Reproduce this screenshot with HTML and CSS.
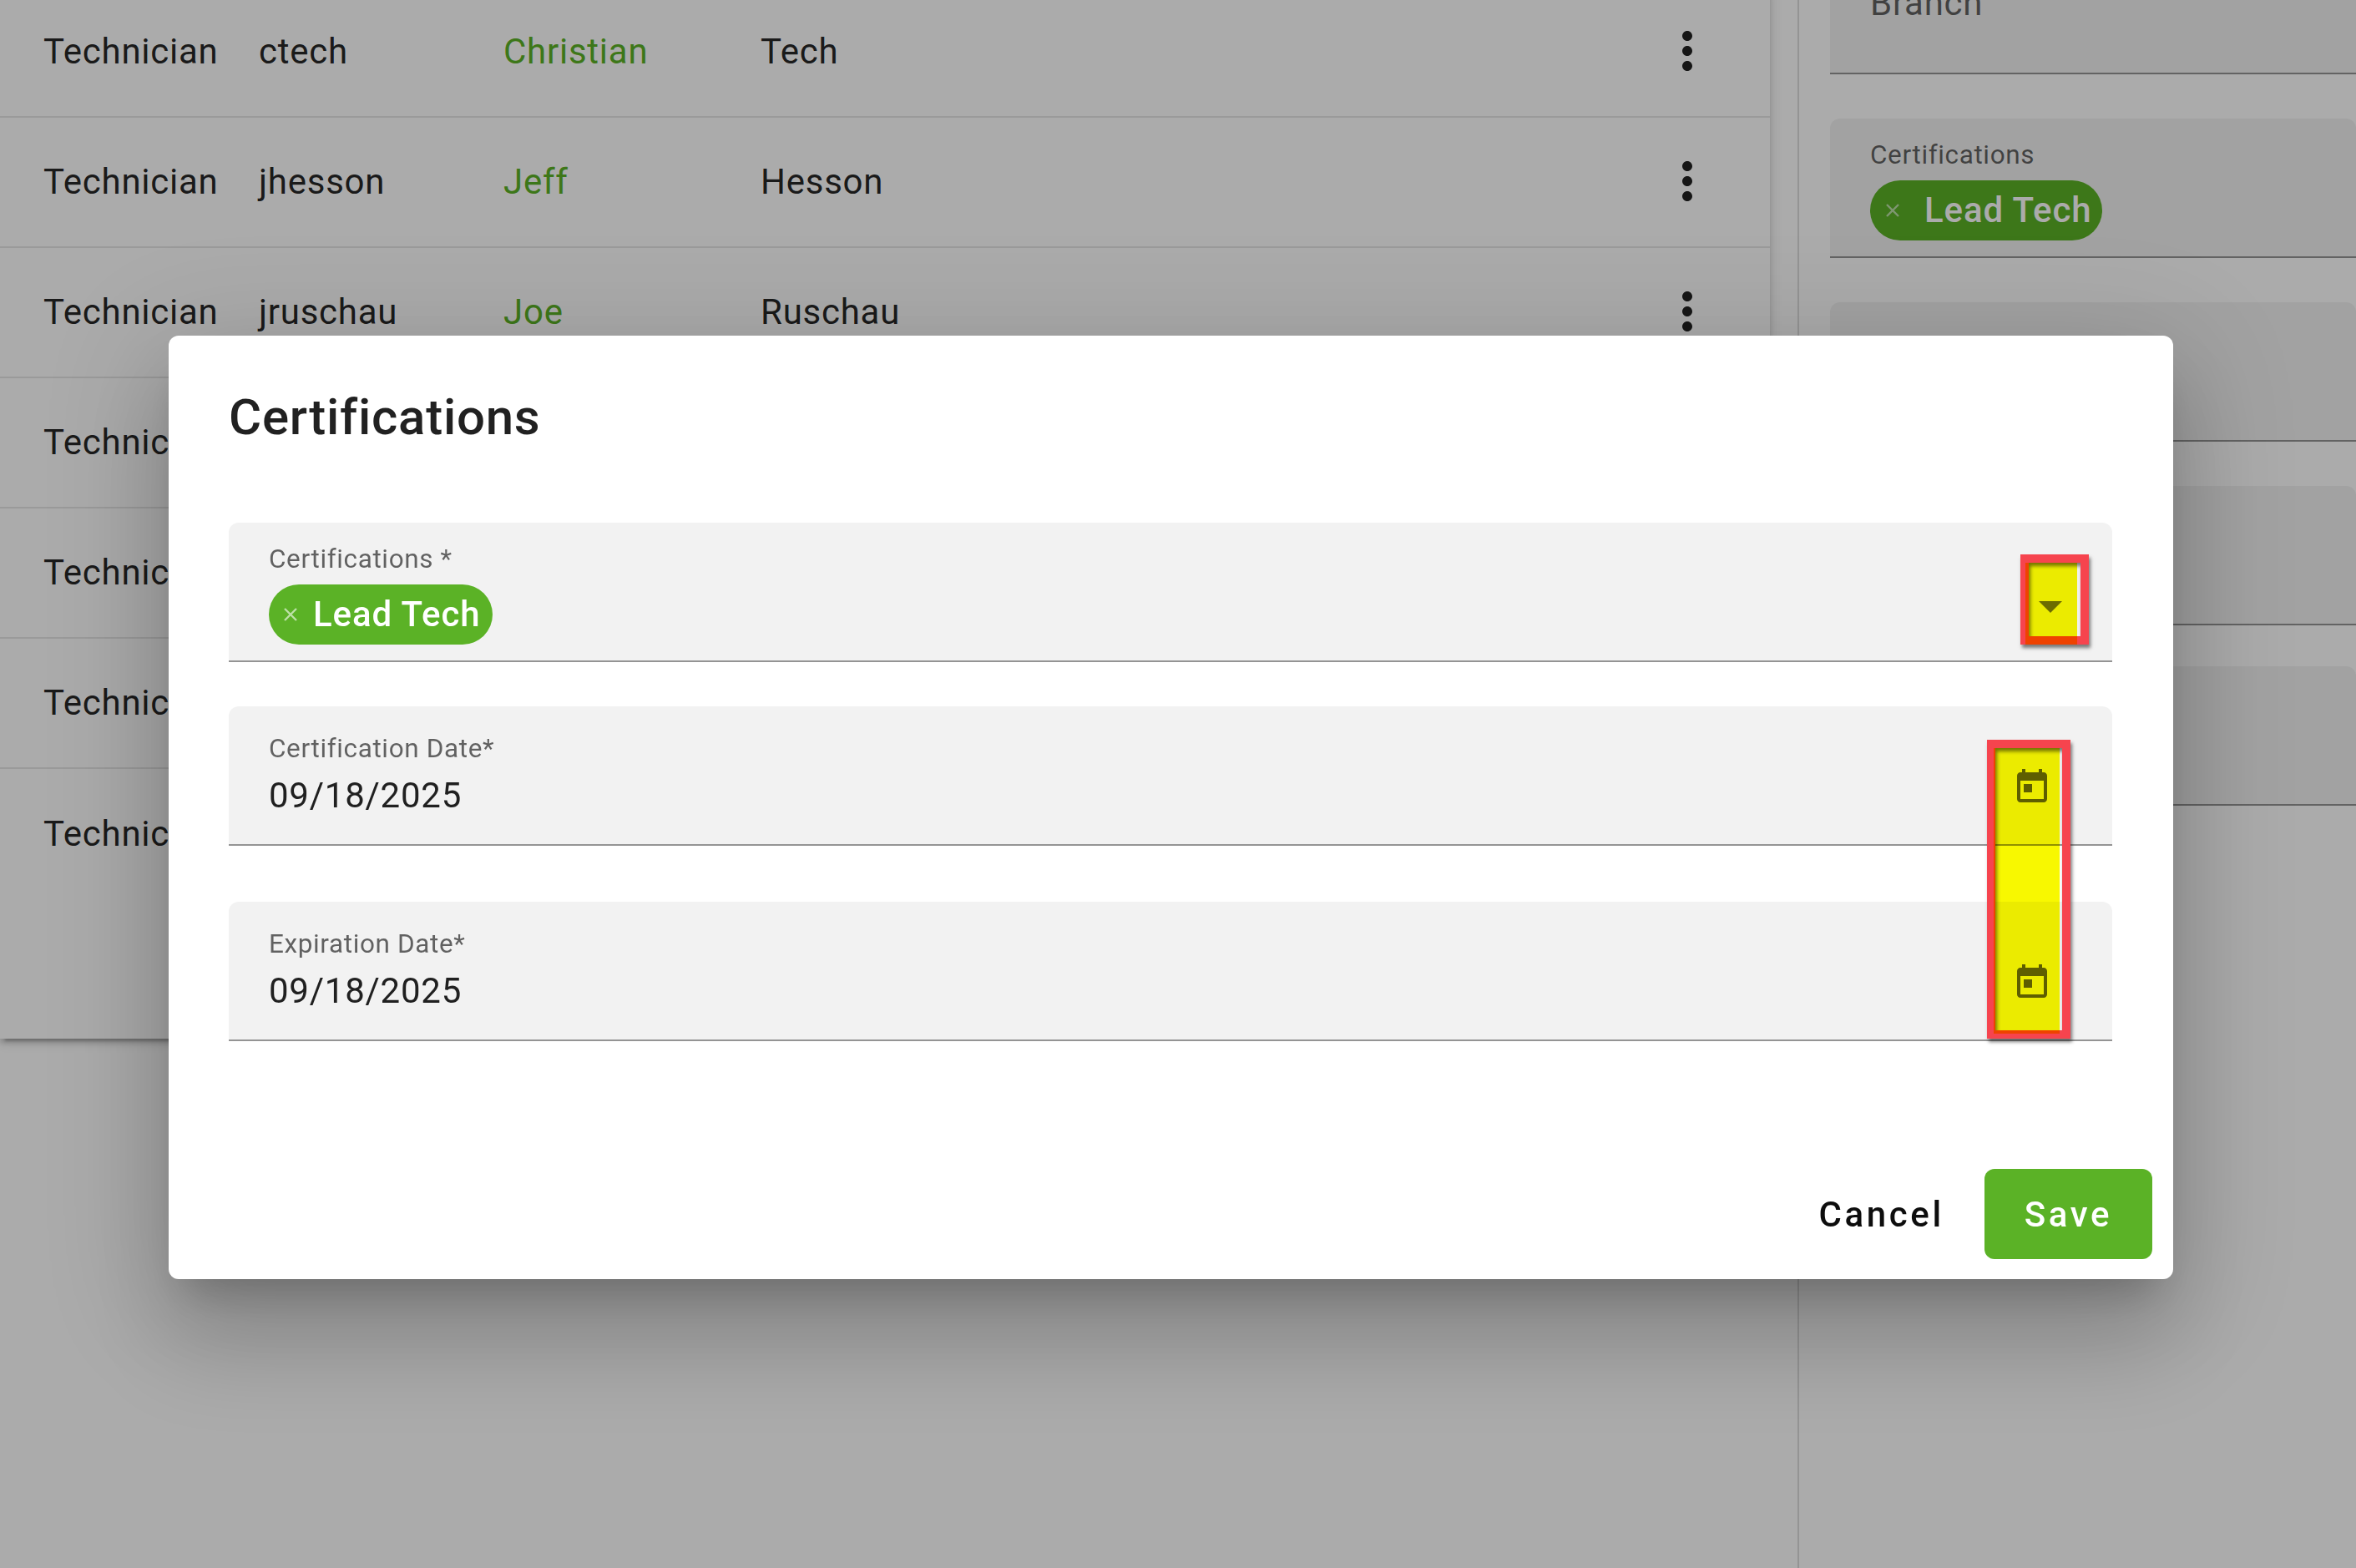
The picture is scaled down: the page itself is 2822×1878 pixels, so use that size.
FILE: index.html
```html
<!DOCTYPE html>
<html lang="en">
<head>
    <meta charset="UTF-8">
    <meta name="viewport" content="width=device-width, initial-scale=1.0">
    <title>Certifications</title>
    <link rel="stylesheet" href="styles.css">
</head>
<body>
    <svg class="sprite" aria-hidden="true">
        <symbol id="icon-more" viewBox="0 0 24 24">
            <path d="M12 8c1.1 0 2-.9 2-2s-.9-2-2-2-2 .9-2 2 .9 2 2 2zm0 2c-1.1 0-2 .9-2 2s.9 2 2 2 2-.9 2-2-.9-2-2-2zm0 6c-1.1 0-2 .9-2 2s.9 2 2 2 2-.9 2-2-.9-2-2-2z"/>
        </symbol>
        <symbol id="icon-today" viewBox="0 0 24 24">
            <path d="M19 3h-1V1h-2v2H8V1H6v2H5c-1.11 0-1.99.9-1.99 2L3 19c0 1.1.89 2 2 2h14c1.1 0 2-.9 2-2V5c0-1.1-.9-2-2-2zm0 16H5V8h14v11zM7 10h5v5H7z"/>
        </symbol>
        <symbol id="icon-remove" viewBox="0 0 18 18">
            <path d="M2 2l14 14M16 2L2 16"/>
        </symbol>
    </svg>

    <main class="page">
        <!-- Users table, scrolled a little -->
        <section class="table-card">
            <div class="row">
                <span class="edge"></span><span>Technician</span><span>ctech</span><span class="name">Christian</span><span>Tech</span>
                <svg class="more"><use href="#icon-more"/></svg>
            </div>
            <div class="row">
                <span class="edge"><span>n</span></span><span>Technician</span><span>jhesson</span><span class="name">Jeff</span><span>Hesson</span>
                <svg class="more"><use href="#icon-more"/></svg>
            </div>
            <div class="row">
                <span class="edge"></span><span>Technician</span><span>jruschau</span><span class="name">Joe</span><span>Ruschau</span>
                <svg class="more"><use href="#icon-more"/></svg>
            </div>
            <div class="row"><span class="edge"></span><span>Technician</span></div>
            <div class="row"><span class="edge"></span><span>Technician</span></div>
            <div class="row"><span class="edge"></span><span>Technician</span></div>
            <div class="row row-last"><span class="edge"></span><span>Technician</span></div>
        </section>

        <!-- Details panel -->
        <aside class="details">
            <div class="field field-plain">
                <span class="plain-value">Branch</span>
            </div>
            <div class="field field-chips">
                <div>
                    <div class="field-label">Certifications</div>
                    <span class="chip chip-wide">
                        <svg class="chip-x"><use href="#icon-remove"/></svg>
                        Lead Tech
                    </span>
                </div>
            </div>
            <div class="field"></div>
            <div class="field"></div>
            <div class="field field-tight"></div>
        </aside>
    </main>

    <div class="backdrop"></div>

    <div class="dialog">
        <h2 class="dialog-title">Certifications</h2>

        <div class="field field-chips">
            <div>
                <div class="field-label">Certifications *</div>
                <span class="chip">
                    <svg class="chip-x"><use href="#icon-remove"/></svg>
                    Lead Tech
                </span>
            </div>
            <span class="select-arrow"></span>
        </div>

        <div class="field field-date">
            <div>
                <div class="field-label">Certification Date*</div>
                <div class="date-value">09/18/2025</div>
            </div>
            <svg class="today"><use href="#icon-today"/></svg>
        </div>

        <div class="field field-date field-last">
            <div>
                <div class="field-label">Expiration Date*</div>
                <div class="date-value">09/18/2025</div>
            </div>
            <svg class="today"><use href="#icon-today"/></svg>
        </div>

        <div class="actions">
            <button class="btn btn-cancel" type="button">Cancel</button>
            <button class="btn btn-save" type="button">Save</button>
        </div>

        <!-- Screenshot annotations drawn on top of the dialog -->
        <div class="mark-frame mark-frame-arrow"></div>
        <div class="mark-fill mark-fill-arrow"></div>
        <div class="mark-frame mark-frame-dates"></div>
        <div class="mark-fill mark-fill-dates"></div>
    </div>
</body>
</html>
```

FILE: styles.css
```css
/* General Styles */
* {
    box-sizing: border-box;
}

html,
body {
    margin: 0;
    height: 100%;
    overflow: hidden;
}

body {
    position: relative;
    background: #ffffff;
    color: rgba(0, 0, 0, 0.87);
    font-family: Roboto, "Liberation Sans", sans-serif;
    font-size: 42px;
    letter-spacing: 0.75px;
}

.sprite {
    display: none;
}

.page {
    display: flex;
    align-items: flex-start;
    height: 100%;
}

/* Table */
.table-card {
    flex: 0 0 2120px;
    height: 1259px;
    margin-top: -15px;
    background: #ffffff;
    box-shadow: 0 9px 3px -6px rgba(0, 0, 0, 0.2), 0 6px 6px 0 rgba(0, 0, 0, 0.14), 0 3px 15px 0 rgba(0, 0, 0, 0.12);
}

.row {
    display: grid;
    grid-template-columns: 52px 258px 293px 308px 1fr 72px;
    align-items: center;
    height: 156px;
    padding-right: 63px;
    padding-bottom: 2px;
    border-bottom: 2px solid #e6e6e6;
}

.row-last {
    border-bottom: none;
}

.edge {
    display: flex;
    justify-content: flex-end;
    width: 2px;
    overflow: hidden;
}

.name {
    color: #5bb226;
}

.more {
    grid-column: 6;
    width: 72px;
    height: 72px;
    fill: rgba(0, 0, 0, 0.87);
}

/* Details panel */
.details {
    flex: 1;
    align-self: stretch;
    margin-left: 33px;
    padding-left: 37px;
    border-left: 2px solid #dddddd;
    display: flex;
    flex-direction: column;
    gap: 53px;
}

.details .field:first-child {
    margin-top: -78px;
}

.field-tight {
    margin-top: -4px;
}

/* Form fields */
.field {
    flex: none;
    display: flex;
    justify-content: space-between;
    align-items: flex-start;
    height: 167px;
    padding-left: 48px;
    background: #f2f2f2;
    border-bottom: 2px solid #949494;
    border-radius: 12px 12px 0 0;
}

.field-plain {
    padding-top: 58px;
}

.plain-value {
    color: rgba(0, 0, 0, 0.6);
    line-height: 48px;
}

.field-chips {
    padding-top: 26px;
}

.field-date {
    padding-top: 33px;
}

.field-label {
    height: 36px;
    font-size: 31.5px;
    line-height: 36px;
    letter-spacing: 0.62px;
    color: rgba(0, 0, 0, 0.6);
}

.chip {
    display: inline-flex;
    align-items: center;
    gap: 18px;
    height: 72px;
    margin-top: 12px;
    padding: 0 15px 2px 17px;
    background: #5bb226;
    border-radius: 36px;
    color: #ffffff;
    font-weight: 500;
    letter-spacing: 0.9px;
}

.chip-wide {
    gap: 29px;
    padding-left: 18px;
    padding-right: 13px;
}

.chip-x {
    width: 18px;
    height: 18px;
    margin-top: 2px;
    fill: none;
    stroke: rgba(255, 255, 255, 0.6);
    stroke-width: 2.4;
}

.date-value {
    margin-top: 14px;
    line-height: 48px;
}

.select-arrow {
    margin: 68px 60px 0 0;
    border-left: 14px solid transparent;
    border-right: 14px solid transparent;
    border-top: 14px solid rgba(0, 0, 0, 0.54);
}

.today {
    width: 48px;
    height: 48px;
    margin: 40px 72px 0 0;
    fill: rgba(0, 0, 0, 0.6);
}

/* Dialog */
.backdrop {
    position: absolute;
    inset: 0;
    background: rgba(0, 0, 0, 0.33);
}

.dialog {
    position: absolute;
    left: 202px;
    top: 402px;
    width: 2401px;
    height: 1130px;
    display: flex;
    flex-direction: column;
    padding: 62px 73px 24px 72px;
    background: #ffffff;
    border-radius: 12px;
    box-shadow: 0 33px 45px -21px rgba(0, 0, 0, 0.2), 0 72px 114px 9px rgba(0, 0, 0, 0.14), 0 27px 138px 24px rgba(0, 0, 0, 0.12);
    isolation: isolate;
}

.dialog-title {
    margin: 0 0 90px;
    font-size: 60px;
    font-weight: 500;
    line-height: 72px;
}

.dialog .field + .field {
    margin-top: 53px;
}

.dialog .field-last.field-last {
    margin-top: 67px;
}

.actions {
    display: flex;
    justify-content: flex-end;
    margin-top: auto;
    margin-right: -48px;
}

.btn {
    height: 108px;
    padding: 0 48px;
    border: none;
    border-radius: 12px;
    background: transparent;
    font-family: inherit;
    font-size: 42px;
    font-weight: 500;
    letter-spacing: 3.6px;
    color: rgba(0, 0, 0, 0.95);
}

.btn-save {
    background: #5bb226;
    color: #ffffff;
}

/* Annotations */
.mark-frame {
    position: absolute;
    border: 10px solid #f6444e;
    box-shadow: 2px 4px 4px rgba(0, 0, 0, 0.5), inset 2px 4px 4px rgba(0, 0, 0, 0.5);
}

.mark-fill {
    position: absolute;
    background: #f8f800;
    mix-blend-mode: multiply;
}

.mark-frame-arrow {
    left: 2218px;
    top: 262px;
    width: 82px;
    height: 108px;
}

.mark-fill-arrow {
    left: 2224px;
    top: 272px;
    width: 62px;
    height: 98px;
}

.mark-frame-dates {
    left: 2178px;
    top: 484px;
    width: 100px;
    height: 358px;
}

.mark-fill-dates {
    left: 2186px;
    top: 494px;
    width: 79px;
    height: 342px;
}
```
